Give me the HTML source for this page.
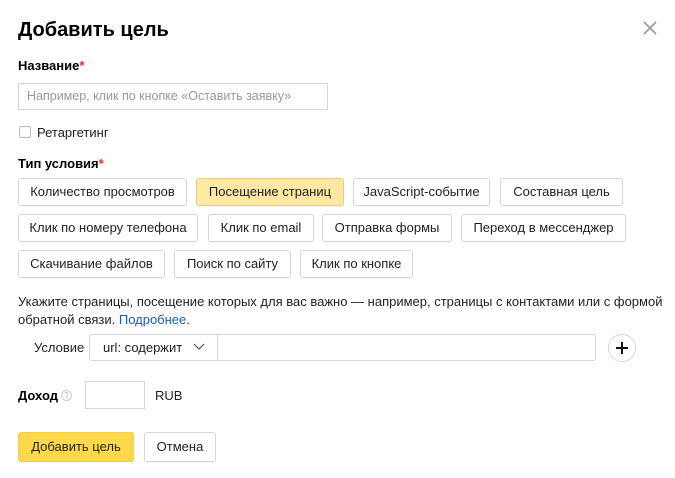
<!DOCTYPE html>
<html><head><meta charset="utf-8"><style>
*{box-sizing:border-box;margin:0;padding:0}
body{width:675px;height:478px;background:#fff;font-family:"Liberation Sans",Arial,sans-serif;color:#000;position:relative;overflow:hidden;font-size:13px}
.a{position:absolute}
.b{position:absolute;height:28px;border:1px solid #d6d6d6;border-radius:3px;background:#fff;font-size:13px;line-height:26px;text-align:center;color:#222;box-shadow:0 1px 1px rgba(0,0,0,.04)}
.y{background:#fee8a3;border-color:#e8cf86}
.lbl{font-weight:bold;font-size:13px}
.r{color:#e52a2a}
</style></head><body>
<div class="a" style="left:18px;top:19px;font-size:20px;font-weight:bold;">Добавить цель</div>
<svg class="a" style="left:643px;top:21px" width="14" height="14"><path d="M1 1L13 13M13 1L1 13" stroke="#9a9a9a" stroke-width="1.6"/></svg>
<div class="a lbl" style="left:18px;top:58px">Название<span class="r">*</span></div>
<div class="a" style="left:18px;top:83px;width:310px;height:27px;border:1px solid #d6d6d6;color:#999;padding-left:8px;line-height:25px;font-size:12.5px">Например, клик по кнопке «Оставить заявку»</div>
<div class="a" style="left:19px;top:126px;width:12px;height:12px;border:1px solid #bbb;border-radius:2px"></div>
<div class="a" style="left:37px;top:125px;font-size:13px;color:#222">Ретаргетинг</div>
<div class="a lbl" style="left:18px;top:156px">Тип условия<span class="r">*</span></div>
<div class="b" style="left:18px;top:178px;width:169px">Количество просмотров</div>
<div class="b y" style="left:196px;top:178px;width:148px">Посещение страниц</div>
<div class="b" style="left:353px;top:178px;width:137px">JavaScript-событие</div>
<div class="b" style="left:500px;top:178px;width:123px">Составная цель</div>
<div class="b" style="left:18px;top:214px;width:180px">Клик по номеру телефона</div>
<div class="b" style="left:208px;top:214px;width:106px">Клик по email</div>
<div class="b" style="left:322px;top:214px;width:130px">Отправка формы</div>
<div class="b" style="left:461px;top:214px;width:165px">Переход в мессенджер</div>
<div class="b" style="left:18px;top:250px;width:147px">Скачивание файлов</div>
<div class="b" style="left:174px;top:250px;width:117px">Поиск по сайту</div>
<div class="b" style="left:300px;top:250px;width:113px">Клик по кнопке</div>
<div class="a" style="left:18px;top:293px;width:650px;font-size:13px;line-height:18px;color:#222">Укажите страницы, посещение которых для вас важно — например, страницы с контактами или с формой обратной связи. <span style="color:#1f5ba8">Подробнее</span>.</div>
<div class="a" style="left:34px;top:340px;color:#222">Условие</div>
<div class="a" style="left:89px;top:334px;width:129px;height:27px;border:1px solid #d6d6d6;border-radius:3px 0 0 3px;padding-left:13px;line-height:25px;color:#222">url: содержит</div>
<svg class="a" style="left:193px;top:343px" width="12" height="8"><path d="M1 1L6 6L11 1" stroke="#555" stroke-width="1.2" fill="none"/></svg>
<div class="a" style="left:217px;top:334px;width:379px;height:27px;border:1px solid #d6d6d6;border-radius:0 3px 3px 0"></div>
<div class="a" style="left:608px;top:334px;width:28px;height:28px;border:1px solid #d6d6d6;border-radius:50%"></div>
<svg class="a" style="left:615px;top:341px" width="14" height="14"><path d="M7 1V13M1 7H13" stroke="#111" stroke-width="2"/></svg>
<div class="a lbl" style="left:18px;top:388px">Доход</div>
<div class="a" style="left:61px;top:390px;width:11px;height:11px;border:1px solid #ccc;border-radius:50%;font-size:8px;line-height:9px;text-align:center;color:#bbb">?</div>
<div class="a" style="left:85px;top:381px;width:60px;height:28px;border:1px solid #d6d6d6"></div>
<div class="a" style="left:155px;top:388px;color:#222">RUB</div>
<div class="b" style="left:18px;top:432px;width:116px;height:30px;line-height:28px;background:#fdd84b;border-color:#f3cf45">Добавить цель</div>
<div class="b" style="left:144px;top:432px;width:72px;height:30px;line-height:28px">Отмена</div>
</body></html>
